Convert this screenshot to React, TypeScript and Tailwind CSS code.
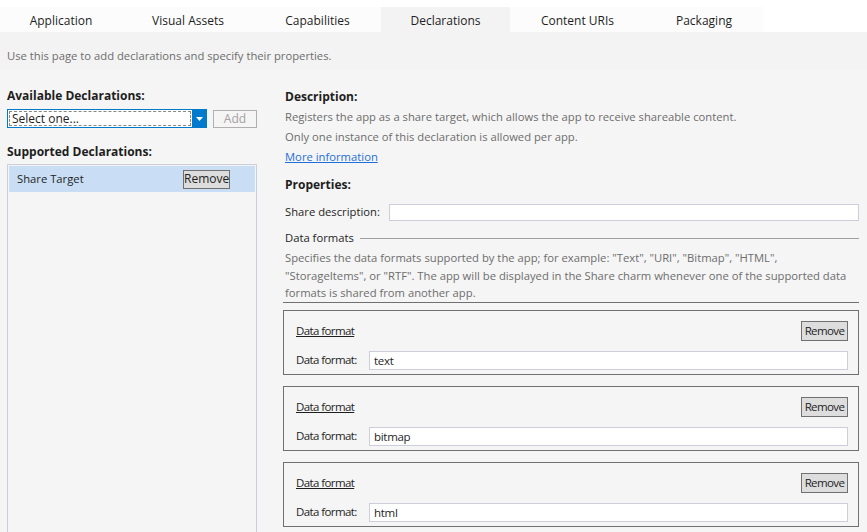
import { useState } from 'react'

const tabs = [
  { label: 'Application', w: 'w-[122px]' },
  { label: 'Visual Assets', w: 'w-[132px]' },
  { label: 'Capabilities', w: 'w-[127px]' },
  { label: 'Declarations', w: 'w-[129px]' },
  { label: 'Content URIs', w: 'w-[135px]' },
  { label: 'Packaging', w: 'w-[118px]' },
]

function FormatBox({ value }: { value: string }) {
  return (
    <div className="border border-[#707070] h-[65px] pl-[12px] pr-[10px] pt-[10px]">
      <div className="flex items-center justify-between h-[20px]">
        <span className="underline text-[#1e1e1e] text-[11.5px] tracking-[-0.6px]">Data format</span>
        <button className="h-[20px] w-[47px] border border-[#707070] bg-[#dddddd] text-[#1e1e1e] text-[11.5px] tracking-[-0.6px] leading-none">Remove</button>
      </div>
      <div className="flex items-center mt-[10px] h-[19px]">
        <span className="w-[73px] text-[#1e1e1e] text-[11.5px] tracking-[-0.6px]">Data format:</span>
        <div className="flex-1 h-[19px] border border-[#cccedb] bg-white pl-[4px] leading-[17px] text-[#1e1e1e] text-[11.5px] tracking-[-0.3px]">{value}</div>
      </div>
    </div>
  )
}

export default function App() {
  const [active] = useState('Declarations')
  return (
    <div className="w-[867px] h-[532px] overflow-hidden bg-[#f5f5f5] text-[11.25px] font-['Segoe_UI','Open_Sans',sans-serif]">
      <div className="bg-white pt-[7px] flex text-[12px]">
        {tabs.map(t => (
          <div
            key={t.label}
            className={`${t.w} h-[25px] pt-[2px] flex items-center justify-center text-[#1e1e1e] ${t.label === active ? 'bg-[#f3f3f3]' : 'bg-[#fcfcfc]'}`}
          >
            {t.label}
          </div>
        ))}
      </div>
      <div className="bg-[#f3f3f3] h-[38px] pl-[7px] pt-[16px] text-[#6d6d6d]">
        Use this page to add declarations and specify their properties.
      </div>
      <div className="flex pl-[7px] pt-[18px]">
        <div className="w-[250px] shrink-0">
          <div className="font-bold text-[12px] text-[#1e1e1e] leading-[16px]">Available Declarations:</div>
          <div className="flex mt-[5px] items-center">
            <div className="w-[200px] h-[19px] border border-[#007acc] bg-white flex">
              <div className="flex-1 m-[1px] border border-dashed border-[#888] leading-[13px] pl-[2px] text-[12px] text-[#1e1e1e]">Select one...</div>
              <div className="w-[14px] bg-[#007acc] flex items-center justify-center">
                <svg width="7" height="4" viewBox="0 0 7 4"><path d="M0 0h7L3.5 4z" fill="white" /></svg>
              </div>
            </div>
            <button className="ml-[6px] w-[44px] h-[18px] border border-[#b0b0b0] text-[#a2a2a2] text-[12px] leading-none">Add</button>
          </div>
          <div className="font-bold text-[12px] text-[#1e1e1e] mt-[16px] leading-[16px]">Supported Declarations:</div>
          <div className="mt-[4px] border border-[#cccedb] h-[400px] p-[1px]">
            <div className="h-[26px] bg-[#c9def5] flex items-center pl-[8px] text-[#1e1e1e]">
              <span className="w-[166px]">Share Target</span>
              <button className="h-[19px] w-[47px] border border-[#707070] bg-[#dddddd] text-[12px] leading-none">Remove</button>
            </div>
          </div>
        </div>
        <div className="ml-[26px] w-[576px] shrink-0 pt-[1px]">
          <div className="pl-[2px]">
            <div className="font-bold text-[12px] text-[#1e1e1e] leading-[16px]">Description:</div>
            <div className="text-[#6d6d6d] mt-[2px] leading-[20px]">Registers the app as a share target, which allows the app to receive shareable content.</div>
            <div className="text-[#6d6d6d] leading-[20px]">Only one instance of this declaration is allowed per app.</div>
            <div className="text-[#1e6fd9] underline leading-[20px]">More information</div>
            <div className="font-bold text-[12px] text-[#1e1e1e] mt-[10px] leading-[16px]">Properties:</div>
            <div className="flex items-center mt-[11px] h-[17px]">
              <span className="w-[104px] text-[#1e1e1e]">Share description:</span>
              <div className="flex-1 h-[17px] border border-[#cccedb] bg-white" />
            </div>
            <div className="flex items-center mt-[9px] h-[16px]">
              <span className="text-[#1e1e1e]">Data formats</span>
              <div className="flex-1 ml-[6px] h-px bg-[#a0a0a0]" />
            </div>
            <div className="text-[#6d6d6d] mt-[3px] leading-[17.5px] pr-[8px]">
              Specifies the data formats supported by the app; for example: "Text", "URI", "Bitmap", "HTML", "StorageItems", or "RTF". The app will be displayed in the Share charm whenever one of the supported data formats is shared from another app.
            </div>
          </div>
          <div className="h-px bg-[#707070]" />
          <div className="mt-[7px] flex flex-col gap-[11px]">
            <FormatBox value="text" />
            <FormatBox value="bitmap" />
            <FormatBox value="html" />
          </div>
        </div>
      </div>
    </div>
  )
}
